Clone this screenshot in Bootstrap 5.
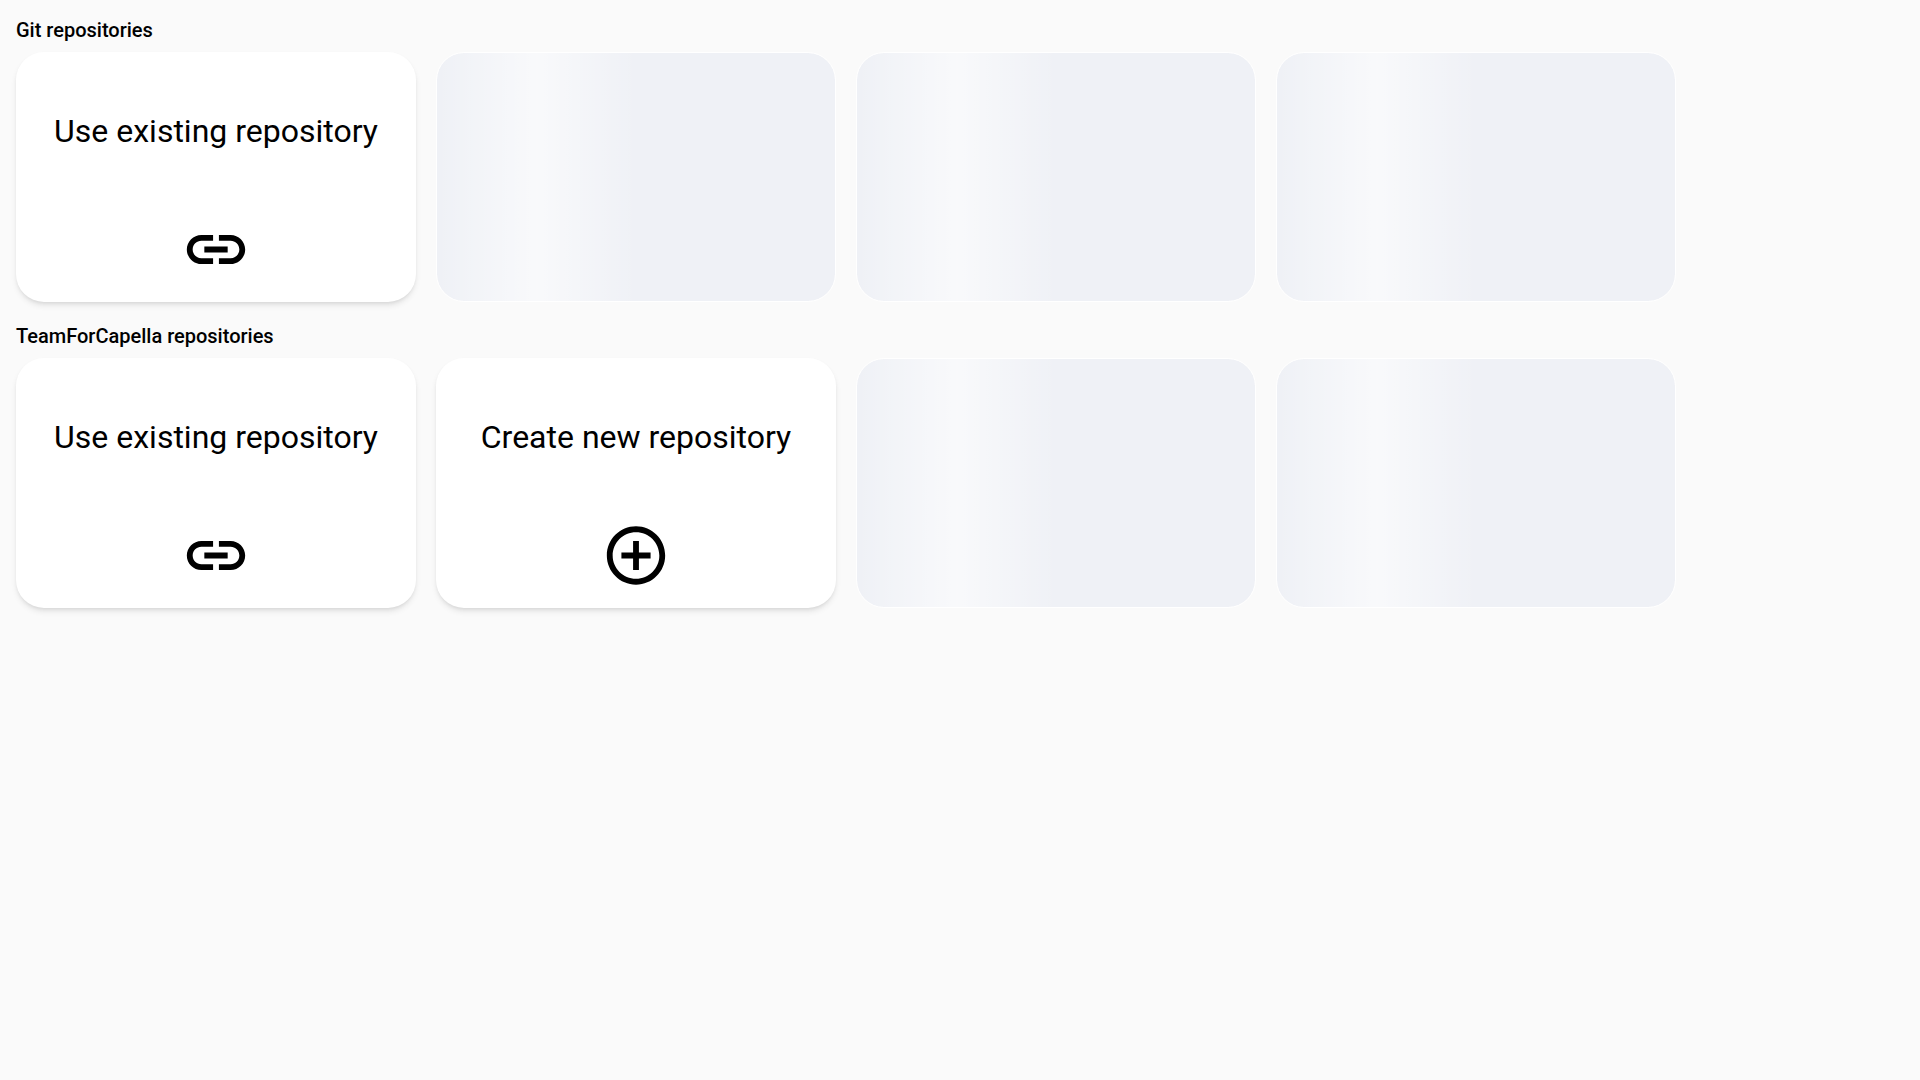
<!DOCTYPE html>
<html lang="en">
<head>
<meta charset="utf-8">
<meta name="viewport" content="width=device-width, initial-scale=1">
<title>Model source</title>
<link href="https://cdn.jsdelivr.net/npm/bootstrap@5.3.0/dist/css/bootstrap.min.css" rel="stylesheet">
<style>
  body { background: #fafafa; color: #000; font-family: Roboto, sans-serif; }
  .page { padding: 16px; }
  .section-title { font-size: 20px; font-weight: 500; line-height: 28px; margin: 0 0 8px; }
  .tiles { gap: 20px; margin-bottom: 20px; }
  .tile { width: 400px; height: 250px; border-radius: 28px; flex: none; }
  .tile-action {
    background: #fff; padding: 0 0 18px; color: #000;
    box-shadow: 0 4px 6px -1px rgba(0,0,0,.1), 0 2px 4px -2px rgba(0,0,0,.1);
  }
  .tile-label { font-size: 32px; line-height: 40px; padding-top: 59px; }
  .tile-icon { width: 70px; height: 70px; fill: currentColor; }
  .tile-skeleton {
    border: 1px solid #fff;
    background: linear-gradient(90deg, rgba(255,255,255,0), rgba(255,255,255,.6), rgba(255,255,255,0)) 0 0 / 200px 100% no-repeat padding-box, #eff1f6;
    background-clip: padding-box;
  }
</style>
</head>
<body>
<svg class="d-none" xmlns="http://www.w3.org/2000/svg">
  <symbol id="link" viewBox="0 -0.17 24 24"><path d="M17 7h-4v2h4c1.65 0 3 1.35 3 3s-1.35 3-3 3h-4v2h4c2.76 0 5-2.24 5-5s-2.24-5-5-5zm-6 8H7c-1.65 0-3-1.35-3-3s1.35-3 3-3h4V7H7c-2.76 0-5 2.24-5 5s2.24 5 5 5h4v-2zm-3-4h8v2H8z"/></symbol>
  <symbol id="add" viewBox="0 -0.17 24 24"><path d="M13 7h-2v4H7v2h4v4h2v-4h4v-2h-4V7zm-1-5C6.480 2 2 6.480 2 12s4.480 10 10 10 10-4.480 10-10S17.520 2 12 2zm0 18c-4.410 0-8-3.590-8-8s3.590-8 8-8 8 3.590 8 8-3.590 8-8 8z"/></symbol>
</svg>
<main class="page">
  <section>
    <h2 class="section-title">Git repositories</h2>
    <div class="tiles d-flex">
      <a href="#" class="tile tile-action d-flex flex-column align-items-center justify-content-between text-decoration-none">
        <span class="tile-label">Use existing repository</span>
        <svg class="tile-icon"><use href="#link"/></svg>
      </a>
      <div class="tile tile-skeleton"></div>
      <div class="tile tile-skeleton"></div>
      <div class="tile tile-skeleton"></div>
    </div>
  </section>
  <section>
    <h2 class="section-title">TeamForCapella repositories</h2>
    <div class="tiles d-flex">
      <a href="#" class="tile tile-action d-flex flex-column align-items-center justify-content-between text-decoration-none">
        <span class="tile-label">Use existing repository</span>
        <svg class="tile-icon"><use href="#link"/></svg>
      </a>
      <a href="#" class="tile tile-action d-flex flex-column align-items-center justify-content-between text-decoration-none">
        <span class="tile-label">Create new repository</span>
        <svg class="tile-icon"><use href="#add"/></svg>
      </a>
      <div class="tile tile-skeleton"></div>
      <div class="tile tile-skeleton"></div>
    </div>
  </section>
</main>
<script src="https://cdn.jsdelivr.net/npm/bootstrap@5.3.0/dist/js/bootstrap.bundle.min.js"></script>
</body>
</html>
